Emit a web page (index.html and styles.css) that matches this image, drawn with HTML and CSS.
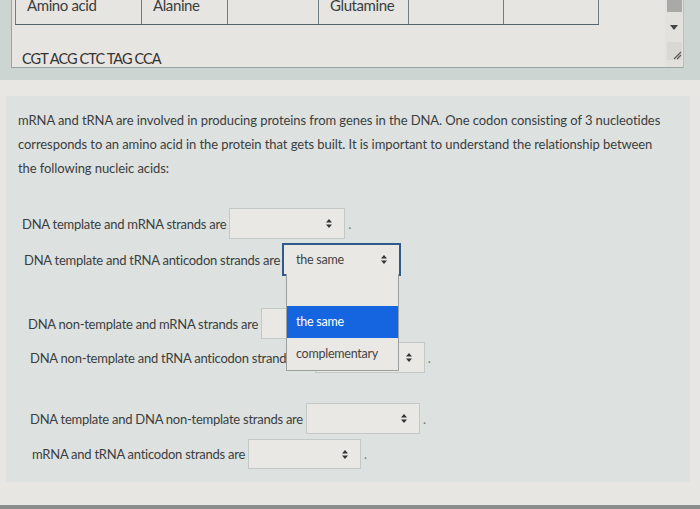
FILE: index.html
```html
<!DOCTYPE html>
<html>
<head>
<meta charset="utf-8">
<link rel="stylesheet" href="styles.css">
</head>
<body>
<div class="editor-wrap">
  <div class="editor">
    <div class="editor-main">
      <table class="codon-table">
        <tr>
          <td class="c1">Amino acid</td>
          <td class="c2">Alanine</td>
          <td class="c3"></td>
          <td class="c4">Glutamine</td>
          <td class="c5"></td>
          <td class="c6"></td>
        </tr>
      </table>
      <div class="seq">CGT ACG CTC TAG CCA</div>
    </div>
    <div class="scrollbar">
      <div class="thumb"></div>
      <div class="arrow-down"></div>
      <div class="grip">
        <svg width="10" height="10" viewBox="0 0 10 10"><path d="M2 9 L9 2 M5 9 L9 5" stroke="#555" stroke-width="1.1" fill="none"/></svg>
      </div>
    </div>
  </div>
</div>

<div class="gap-band"></div>

<div class="panel">
  <p class="intro">mRNA and tRNA are involved in producing proteins from genes in the DNA. One codon consisting of 3 nucleotides corresponds to an amino acid in the protein that gets built. It is important to understand the relationship between the following nucleic acids:</p>

  <div class="row r1">
    <span class="label">DNA template and mRNA strands are</span>
    <span class="select w116"><span class="val"></span><svg class="arr" width="8" height="11" viewBox="0 0 8 11"><path d="M1 4.5 L4 1 L7 4.5 Z M1 6.5 L4 10 L7 6.5 Z" fill="#333"/></svg></span><span class="dot">.</span>
  </div>

  <div class="row r2 gap-s">
    <span class="label">DNA template and tRNA anticodon strands are</span>
    <span class="select focused w119"><span class="val">the same</span><svg class="arr" width="8" height="11" viewBox="0 0 8 11"><path d="M1 4.5 L4 1 L7 4.5 Z M1 6.5 L4 10 L7 6.5 Z" fill="#333"/></svg>
      <span class="dropdown">
        <span class="opt"></span>
        <span class="opt selected">the same</span>
        <span class="opt">complementary</span>
      </span>
    </span>
  </div>

  <div class="row r3 gap-l">
    <span class="label">DNA non-template and mRNA strands are</span>
    <span class="select w116"><span class="val"></span><svg class="arr" width="8" height="11" viewBox="0 0 8 11"><path d="M1 4.5 L4 1 L7 4.5 Z M1 6.5 L4 10 L7 6.5 Z" fill="#333"/></svg></span><span class="dot">.</span>
  </div>

  <div class="row r4 gap-xs">
    <span class="label">DNA non-template and tRNA anticodon strands are</span>
    <span class="select w110"><span class="val"></span><svg class="arr" width="8" height="11" viewBox="0 0 8 11"><path d="M1 4.5 L4 1 L7 4.5 Z M1 6.5 L4 10 L7 6.5 Z" fill="#333"/></svg></span><span class="dot">.</span>
  </div>

  <div class="row r5 gap-l2">
    <span class="label">DNA template and DNA non-template strands are</span>
    <span class="select w114"><span class="val"></span><svg class="arr" width="8" height="11" viewBox="0 0 8 11"><path d="M1 4.5 L4 1 L7 4.5 Z M1 6.5 L4 10 L7 6.5 Z" fill="#333"/></svg></span><span class="dot">.</span>
  </div>

  <div class="row r6 gap-m">
    <span class="label">mRNA and tRNA anticodon strands are</span>
    <span class="select w113"><span class="val"></span><svg class="arr" width="8" height="11" viewBox="0 0 8 11"><path d="M1 4.5 L4 1 L7 4.5 Z M1 6.5 L4 10 L7 6.5 Z" fill="#333"/></svg></span><span class="dot">.</span>
  </div>
</div>
<div class="bottom-edge"></div>
</body>
</html>
```

FILE: styles.css
```css
html, body {
  margin: 0;
  padding: 0;
}
body {
  width: 700px;
  height: 509px;
  overflow: hidden;
  background: #e8e6e2;
  font-family: Lato, "Open Sans", sans-serif;
  color: #3b3d3e;
}

/* top text editor */
.editor-wrap {
  background: #cdd5d2;
  padding: 0 16px 12px 11px;
}
.editor {
  height: 67px;
  background: #e7e5e1;
  border-left: 1px solid #9aa3a4;
  border-bottom: 1px solid #9aa3a4;
  border-right: 1px solid #b9c0c0;
  display: flex;
}
.editor-main {
  flex: 1;
  display: flex;
  flex-direction: column;
  justify-content: space-between;
  align-items: flex-start;
  overflow: hidden;
}
.codon-table {
  border-collapse: collapse;
  table-layout: fixed;
  width: 583px;
  margin: -14px 0 0 3px;
  font-size: 15px;
  letter-spacing: -0.4px;
  color: #3a3d40;
}
.codon-table td {
  box-sizing: border-box;
  height: 38px;
  padding: 9px 0 0 11px;
  vertical-align: top;
  line-height: 20px;
  border-right: 1px solid #6f7e88;
  border-bottom: 1px solid #55636c;
  border-left: 1px solid #6f7e88;
}
.c1 { width: 126px; }
.c2 { width: 86px; }
.c3 { width: 91px; }
.c4 { width: 90px; }
.c5 { width: 95px; }
.c6 { width: 95px; }
.seq {
  font-size: 14.5px;
  letter-spacing: -0.9px;
  padding-left: 10px;
  line-height: 16px;
  color: #333;
}
.scrollbar {
  width: 18px;
  background: #e2e1de;
  display: flex;
  flex-direction: column;
  align-items: center;
}
.thumb {
  width: 15px;
  height: 12px;
  background: #a9a9a7;
}
.arrow-down {
  margin-top: 13px;
  width: 0;
  height: 0;
  border-left: 4px solid transparent;
  border-right: 4px solid transparent;
  border-top: 5px solid #444;
}
.grip {
  margin-top: 12px;
  width: 15px;
  height: 18px;
  background: #d9d8d5;
  display: flex;
  align-items: flex-end;
  justify-content: flex-end;
}

.gap-band {
  height: 16px;
  background: #e9e7e3;
}

/* question panel */
.panel {
  margin: 0 10px 0 6px;
  height: 386px;
  background: #dde2e0;
  padding: 12px 0 0 0;
  box-sizing: border-box;
  font-size: 13px;
  letter-spacing: -0.25px;
}
.intro {
  margin: 0 22px 0 12px;
  line-height: 24px;
  letter-spacing: -0.08px;
}
.row {
  display: flex;
  align-items: center;
  height: 31px;
}
.r1 { margin-top: 28px; padding-left: 16px; }
.r2 { padding-left: 18px; height: 33px; }
.r3 { padding-left: 22px; }
.r4 { padding-left: 24px; }
.r5 { padding-left: 24px; }
.r6 { padding-left: 26px; height: 30px; }
.gap-xs { margin-top: 3px; }
.gap-s { margin-top: 4px; }
.gap-m { margin-top: 5px; }
.gap-l { margin-top: 32px; }
.gap-l2 { margin-top: 30px; }

.label { white-space: nowrap; }
.select {
  position: relative;
  display: flex;
  align-items: center;
  justify-content: space-between;
  box-sizing: border-box;
  height: 100%;
  margin-left: 3px;
  background: #e9e8e5;
  border: 1px solid #c3c8c8;
  padding: 0 11px 0 12px;
}
.focused {
  border: 2px solid #30598c;
  margin-left: 2px;
}
.val { color: #444; font-size: 12.5px; }
.w110 { width: 110px; }
.w113 { width: 113px; }
.w114 { width: 114px; }
.w116 { width: 116px; }
.w119 { width: 119px; }
.dot { margin-left: 3px; color: #777; }

.dropdown {
  position: absolute;
  top: 100%;
  left: 2px;
  width: 113px;
  display: flex;
  flex-direction: column;
  background: #e9e8e5;
  border: 1px solid #9c9fa0;
  border-top: none;
  box-sizing: border-box;
  z-index: 5;
}
.opt {
  height: 32px;
  line-height: 32px;
  padding-left: 9px;
  font-size: 12.5px;
  color: #444;
}
.opt.selected {
  background: #1565e0;
  color: #fff;
}

.bottom-edge {
  position: absolute;
  left: 0;
  right: 0;
  top: 505px;
  height: 4px;
  background: #8b8c8c;
}
```
